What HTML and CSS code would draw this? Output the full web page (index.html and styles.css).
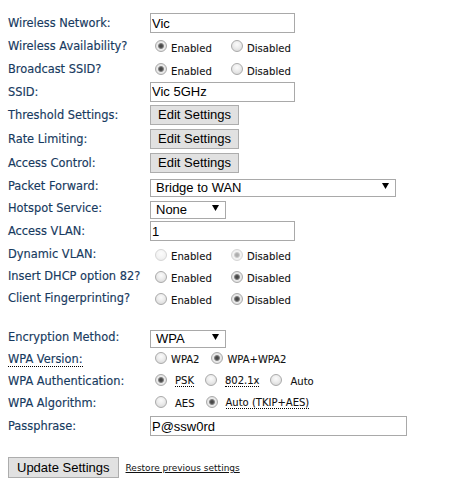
FILE: index.html
```html
<!DOCTYPE html>
<html>
<head>
<meta charset="utf-8">
<link rel="stylesheet" href="styles.css">
</head>
<body>
<form class="form">
  <div class="row h22">
    <span class="lbl">Wireless Network:</span>
    <input class="txt w145" type="text" value="Vic">
  </div>
  <div class="row h23">
    <span class="lbl">Wireless Availability?</span>
    <span class="opts ed">
      <label class="opt"><input type="radio" name="av" checked><span>Enabled</span></label>
      <label class="opt"><input type="radio" name="av"><span>Disabled</span></label>
    </span>
  </div>
  <div class="row h23">
    <span class="lbl">Broadcast SSID?</span>
    <span class="opts ed">
      <label class="opt"><input type="radio" name="bs" checked><span>Enabled</span></label>
      <label class="opt"><input type="radio" name="bs"><span>Disabled</span></label>
    </span>
  </div>
  <div class="row h23">
    <span class="lbl">SSID:</span>
    <input class="txt w145" type="text" value="Vic 5GHz">
  </div>
  <div class="row h24">
    <span class="lbl">Threshold Settings:</span>
    <button type="button" class="btn">Edit Settings</button>
  </div>
  <div class="row h24">
    <span class="lbl">Rate Limiting:</span>
    <button type="button" class="btn">Edit Settings</button>
  </div>
  <div class="row h24">
    <span class="lbl">Access Control:</span>
    <button type="button" class="btn">Edit Settings</button>
  </div>
  <div class="row h22">
    <span class="lbl">Packet Forward:</span>
    <span class="sel w246"><select><option>Bridge to WAN</option></select><svg class="arr" width="7" height="6" viewBox="0 0 7 6"><path d="M0 0H7L3.5 6Z" fill="#000"/></svg></span>
  </div>
  <div class="row h22">
    <span class="lbl">Hotspot Service:</span>
    <span class="sel w76"><select><option>None</option></select><svg class="arr" width="7" height="6" viewBox="0 0 7 6"><path d="M0 0H7L3.5 6Z" fill="#000"/></svg></span>
  </div>
  <div class="row h24">
    <span class="lbl">Access VLAN:</span>
    <input class="txt w145" type="text" value="1">
  </div>
  <div class="row h22">
    <span class="lbl">Dynamic VLAN:</span>
    <span class="opts ed">
      <label class="opt"><input type="radio" name="dv" disabled><span>Enabled</span></label>
      <label class="opt"><input type="radio" name="dv" checked disabled><span>Disabled</span></label>
    </span>
  </div>
  <div class="row h22">
    <span class="lbl">Insert DHCP option 82?</span>
    <span class="opts ed">
      <label class="opt"><input type="radio" name="dh"><span>Enabled</span></label>
      <label class="opt"><input type="radio" name="dh" checked><span>Disabled</span></label>
    </span>
  </div>
  <div class="row h22">
    <span class="lbl">Client Fingerprinting?</span>
    <span class="opts ed">
      <label class="opt"><input type="radio" name="cf"><span>Enabled</span></label>
      <label class="opt"><input type="radio" name="cf" checked><span>Disabled</span></label>
    </span>
  </div>

  <div class="spacer"></div>

  <div class="row h22">
    <span class="lbl">Encryption Method:</span>
    <span class="sel w76"><select><option>WPA</option></select><svg class="arr" width="7" height="6" viewBox="0 0 7 6"><path d="M0 0H7L3.5 6Z" fill="#000"/></svg></span>
  </div>
  <div class="row h22">
    <span class="lbl"><abbr class="dot" title="WPA Version">WPA Version:</abbr></span>
    <span class="opts wpa">
      <label class="opt tight"><input type="radio" name="wv"><span>WPA2</span></label>
      <label class="opt tight"><input type="radio" name="wv" checked><span>WPA+WPA2</span></label>
    </span>
  </div>
  <div class="row h22">
    <span class="lbl">WPA Authentication:</span>
    <span class="opts wpa">
      <label class="opt wide"><input type="radio" name="wa" checked><abbr class="dot">PSK</abbr></label>
      <label class="opt wide"><input type="radio" name="wa"><abbr class="dot">802.1x</abbr></label>
      <label class="opt wide"><input type="radio" name="wa"><span>Auto</span></label>
    </span>
  </div>
  <div class="row h22">
    <span class="lbl">WPA Algorithm:</span>
    <span class="opts wpa">
      <label class="opt wide"><input type="radio" name="wg"><span>AES</span></label>
      <label class="opt wide"><input type="radio" name="wg" checked><abbr class="dot">Auto (TKIP+AES)</abbr></label>
    </span>
  </div>
  <div class="row h24">
    <span class="lbl">Passphrase:</span>
    <input class="txt w257" type="text" value="P@ssw0rd">
  </div>

  <div class="footer">
    <button type="button" class="btn big">Update Settings</button>
    <a href="#" class="restore">Restore previous settings</a>
  </div>
</form>
</body>
</html>
```

FILE: styles.css
```css
html, body {
  margin: 0;
  padding: 0;
  background: #fff;
}
body {
  padding: 8px;
}
.form {
  display: flex;
  flex-direction: column;
  padding-top: 4px;
  font-family: "DejaVu Sans", "Liberation Sans", sans-serif;
}
.row {
  display: flex;
  align-items: center;
}
.h22 { height: 22px; }
.h23 { height: 23px; }
.h24 { height: 24px; }
.lbl {
  width: 142px;
  flex: none;
  font-size: 11.4px;
  color: #173a60;
  white-space: nowrap;
  -webkit-text-stroke: 0.15px #173a60;
}
.dot {
  text-decoration: none;
  border-bottom: 1px dotted #000;
}
.txt {
  box-sizing: border-box;
  height: 20px;
  margin: 0;
  border: 1px solid #a9a9a9;
  padding: 0 1px;
  font-family: "Liberation Sans", Arial, sans-serif;
  font-size: 13px;
  color: #000;
  background: #fff;
}
.w145 { width: 145px; }
.w257 { width: 257px; }
.btn {
  box-sizing: border-box;
  height: 20px;
  margin: 0;
  padding: 0 7px;
  border: 1px solid #adadad;
  background: #e1e1e1;
  font-family: "Liberation Sans", Arial, sans-serif;
  font-size: 13px;
  color: #000;
  line-height: 18px;
}
.btn.big {
  height: 21px;
  padding: 0 8px 0 8px;
}
.sel {
  position: relative;
  display: inline-block;
  height: 18px;
}
.sel select {
  -webkit-appearance: none;
  appearance: none;
  box-sizing: border-box;
  width: 100%;
  height: 18px;
  margin: 0;
  border: 1px solid #a9a9a9;
  border-radius: 0;
  background: #fff;
  padding: 0 0 0 5px;
  font-family: "Liberation Sans", Arial, sans-serif;
  font-size: 13px;
  line-height: 16px;
  color: #000;
}
.sel .arr {
  position: absolute;
  right: 7px;
  top: 6px;
}
.w246 { width: 246px; }
.w76 { width: 76px; }
.opts {
  display: flex;
  align-items: center;
  padding-left: 5px;
  font-size: 10.1px;
  color: #111;
  white-space: nowrap;
  -webkit-text-stroke: 0.1px #111;
}
.opts.ed {
  padding-top: 5px;
}
.opts.ed .opt {
  width: 76px;
}
.opt {
  display: flex;
  align-items: center;
}
.opt input {
  -webkit-appearance: none;
  appearance: none;
  box-sizing: border-box;
  width: 12px;
  height: 12px;
  margin: -4px 4px 0 0;
  border-radius: 50%;
  border: 1px solid #aaa;
  background: radial-gradient(circle at 50% 35%, #fbfbfb 0, #ececec 45%, #d2d2d2 100%);
  flex: none;
}
.opt input:checked {
  background: radial-gradient(circle at 50% 50%, #3c3c3c 0, #555 1.6px, #8a8a8a 2.6px, #eaeaea 3.4px, #d8d8d8 100%);
}
.opt input:disabled {
  border-color: #d6d6d6;
  background: radial-gradient(circle at 50% 35%, #fcfcfc 0, #f2f2f2 60%, #e6e6e6 100%);
}
.opt input:disabled:checked {
  background: radial-gradient(circle at 50% 50%, #a8a8a8 0, #b4b4b4 1.6px, #cfcfcf 2.6px, #f3f3f3 3.4px, #e8e8e8 100%);
}
.opts.wpa {
  font-size: 10px;
}
.opts.wpa .opt input {
  margin-top: -2px;
}
.opt.tight {
  margin-right: 12px;
}
.opt.wide input {
  margin-right: 8px;
}
.opt.wide {
  margin-right: 11px;
}
.spacer {
  height: 17px;
}
.footer {
  display: flex;
  align-items: center;
  margin-top: 19px;
  gap: 7px;
}
.restore {
  font-size: 9px;
  color: #111;
  text-decoration: underline;
  margin-top: 1px;
}
```
